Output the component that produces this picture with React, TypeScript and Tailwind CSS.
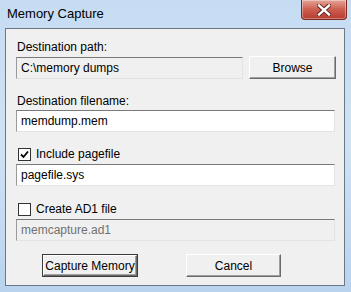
import React from "react";

const font = { fontFamily: '"Liberation Sans", Arial, sans-serif' };

function Field({ value, width, disabled, grey }: { value: string; width: string; disabled?: boolean; grey?: boolean }) {
  return (
    <div
      className={`${width} h-[22px] flex items-center pl-[4px] border border-t-[#7a7a7a] border-l-[#9a9a9a] border-r-[#e3e3e3] border-b-[#e3e3e3] ${
        disabled ? "bg-[#f0f0f0]" : "bg-white"
      }`}
    >
      <span className={`text-[12px] leading-none whitespace-nowrap ${grey ? "text-[#707070]" : "text-black"}`}>{value}</span>
    </div>
  );
}

function Button({ label, width, def }: { label: string; width: string; def?: boolean }) {
  return (
    <div className={`${width} h-[23px] ${def ? "border border-[#3c3c3c]" : ""}`}>
      <div className="w-full h-full flex items-center justify-center bg-[#f0f0f0] border border-t-white border-l-white border-r-[#6b6b6b] border-b-[#6b6b6b] shadow-[inset_-1px_-1px_0_#a0a0a0]">
        <span className="text-[12px] text-black leading-none whitespace-nowrap">{label}</span>
      </div>
    </div>
  );
}

function Check({ checked, label }: { checked?: boolean; label: string }) {
  return (
    <div className="flex items-center h-[16px]">
      <div className="w-[13px] h-[13px] ml-[2px] bg-white border border-[#333] flex items-center justify-center">
        {checked && (
          <svg width="9" height="9" viewBox="0 0 9 9">
            <path d="M1 4.5 L3.5 7 L8 1.5" stroke="#000" strokeWidth="1.8" fill="none" />
          </svg>
        )}
      </div>
      <span className="ml-[5px] text-[12px] text-black whitespace-nowrap">{label}</span>
    </div>
  );
}

export default function App() {
  return (
    <div
      style={font}
      className="w-[351px] h-[292px] flex flex-col bg-gradient-to-b from-[#c6dcf2] via-[#cfe2f5] to-[#b9d3ee] px-[5px] pb-[6px]"
    >
      <div className="h-[28px] flex items-start justify-between">
        <span className="mt-[6px] ml-[2px] text-[13px] leading-[16px] text-black whitespace-nowrap">Memory Capture</span>
        <div className="w-[46px] h-[20px] -mr-[1px] rounded-b-[4px] border border-t-0 border-[#7a2a22] bg-gradient-to-b from-[#e3a499] via-[#cc5d50] to-[#b73a2d] flex items-center justify-center shadow-[inset_0_0_0_1px_rgba(255,255,255,0.35)]">
          <svg width="14" height="12" viewBox="0 0 14 12">
            <path d="M2 1.5 L12 10.5 M12 1.5 L2 10.5" stroke="#5a1a14" strokeWidth="4.2" strokeLinecap="square" />
            <path d="M2 1.5 L12 10.5 M12 1.5 L2 10.5" stroke="#ffffff" strokeWidth="2.4" strokeLinecap="square" />
          </svg>
        </div>
      </div>
      <div className="w-[340px] h-[258px] bg-[#f0f0f0] border border-[#6b7886] flex flex-col pl-[10px] pt-[10px]">
        <span className="text-[12px] leading-[16px] text-black ml-[1px]">Destination path:</span>
        <div className="flex items-start mt-[1px]">
          <div className="mt-[1px]">
            <Field value="C:\memory dumps" width="w-[227px]" disabled />
          </div>
          <div className="ml-[6px]">
            <Button label="Browse" width="w-[87px]" />
          </div>
        </div>
        <span className="mt-[14px] text-[12px] leading-[16px] text-black ml-[1px]">Destination filename:</span>
        <div className="mt-[1px]">
          <Field value="memdump.mem" width="w-[319px]" />
        </div>
        <div className="mt-[14px]">
          <Check checked label="Include pagefile" />
        </div>
        <div className="mt-[2px]">
          <Field value="pagefile.sys" width="w-[319px]" />
        </div>
        <div className="mt-[15px]">
          <Check label="Create AD1 file" />
        </div>
        <div className="mt-[2px]">
          <Field value="memcapture.ad1" width="w-[319px]" disabled grey />
        </div>
        <div className="flex mt-[13px] ml-[26px]">
          <Button label="Capture Memory" width="w-[96px]" def />
          <div className="ml-[48px]">
            <Button label="Cancel" width="w-[95px]" />
          </div>
        </div>
      </div>
    </div>
  );
}
